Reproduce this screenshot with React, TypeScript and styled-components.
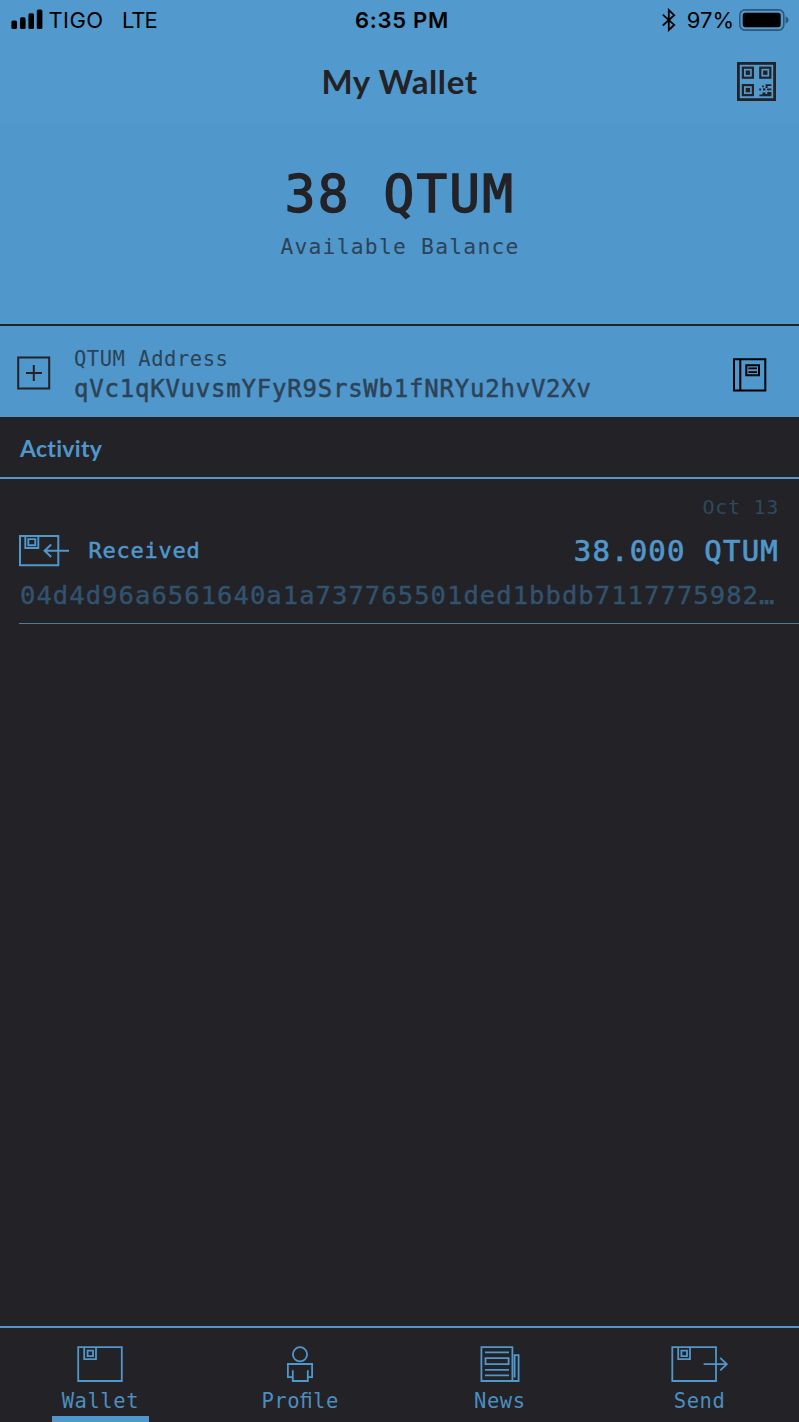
import React from "react";
import styled, { createGlobalStyle } from "styled-components";

const color = {
  blue: "#5097cb",
  header: "#5299cd",
  ink: "#232227",
  slate: "#2c4256",
  faded: "#32536d",
  faint: "#2e495e",
  tab: "#4b8ebf",
};

const GlobalStyle = createGlobalStyle`
  * { box-sizing: border-box; }
  html, body, #root { height: 100%; margin: 0; }
  body { background: ${color.ink}; overflow: hidden; }
  svg { display: block; flex: none; }
`;

const Screen = styled.div`
  display: flex;
  flex-direction: column;
  width: 799px;
  height: 1422px;
  background: ${color.ink};
`;

const StatusBar = styled.div`
  display: grid;
  grid-template-columns: 1fr auto 1fr;
  align-items: center;
  height: 40px;
  padding: 0 10px 0 11px;
  background: ${color.header};
  color: #000;
  font: 400 22px/40px Inter, sans-serif;
`;

const Carrier = styled.div`
  display: flex;
  align-items: center;
`;

const StatusText = styled.span<{ $gap?: number; $spacing?: number }>`
  margin-left: ${(p) => p.$gap ?? 0}px;
  letter-spacing: ${(p) => p.$spacing ?? 0}px;
  white-space: nowrap;
`;

const Clock = styled.div`
  padding-left: 4px;
  font-weight: 600;
  letter-spacing: 0.75px;
`;

const Indicators = styled.div`
  display: flex;
  align-items: center;
  justify-content: flex-end;
`;

const Header = styled.header`
  display: grid;
  grid-template-columns: 1fr auto 1fr;
  align-items: center;
  height: 84px;
  padding: 0 23px 2px;
  background: ${color.header};
`;

const Title = styled.h1`
  grid-column: 2;
  margin: 0;
  color: ${color.ink};
  font: 700 33px/40px Lato, sans-serif;
  letter-spacing: 0.6px;
`;

const HeaderAction = styled.div`
  justify-self: end;
`;

const Mono = styled.span<{
  $size: number;
  $line: number;
  $spacing: number;
  $color: string;
  $heft?: number;
}>`
  display: block;
  color: ${(p) => p.$color};
  font: 400 ${(p) => p.$size}px/${(p) => p.$line}px "DejaVu Sans Mono", monospace;
  letter-spacing: ${(p) => p.$spacing}px;
  -webkit-text-stroke: ${(p) => p.$heft ?? 0}px ${(p) => p.$color};
  white-space: pre;
`;

const Balance = styled.section`
  display: flex;
  flex-direction: column;
  align-items: center;
  height: 200px;
  padding: 40px 0 0 1px;
  background: ${color.blue};
`;

const AddressBar = styled.section`
  display: flex;
  align-items: flex-start;
  height: 92.5px;
  padding: 0 32px 0 17px;
  border-top: 2px solid ${color.ink};
  background: ${color.blue};
`;

const AddressText = styled.div`
  flex: 1;
  padding: 18px 0 0 23px;
`;

const IconTop = styled.div<{ $top: number }>`
  padding-top: ${(p) => p.$top}px;
`;

const SectionTitle = styled.h2`
  height: 62.5px;
  margin: 0;
  padding-left: 20px;
  border-bottom: 2px solid ${color.blue};
  color: ${color.blue};
  font: 700 23px/62px Lato, sans-serif;
  letter-spacing: 0.3px;
`;

const Transaction = styled.article`
  height: 145px;
  margin-left: 19px;
  padding: 13px 20px 0 0;
  border-bottom: 1px solid #4a7c9f;
`;

const DateLine = styled.div`
  display: flex;
  justify-content: flex-end;
`;

const TransactionMain = styled.div`
  display: flex;
  align-items: center;
  height: 58px;
`;

const TransactionKind = styled.div`
  flex: 1;
  padding-left: 19.5px;
`;

const TransactionHash = styled.div`
  margin-top: -1px;
  padding-left: 1px;
`;

const Spacer = styled.main`
  flex: 1;
`;

const TabBar = styled.nav`
  display: grid;
  grid-template-columns: repeat(4, 1fr);
  height: 96.5px;
  border-top: 2px solid ${color.blue};
`;

const Tab = styled.div`
  display: flex;
  flex-direction: column;
  align-items: center;
  padding: 18.5px 0 0 1px;
`;

const TabLabel = styled.div`
  height: 33px;
  padding-top: 3px;
`;

const ActiveMark = styled.div`
  width: 97px;
  height: 7px;
  background: ${color.blue};
`;

const SignalIcon = () => (
  <svg width="32" height="40" viewBox="11 0 32 40">
    <rect x="11.4" y="20.4" width="5.6" height="8.6" rx="1.6" />
    <rect x="20" y="17.3" width="5.6" height="11.7" rx="1.6" />
    <rect x="28.4" y="13.3" width="5.6" height="15.7" rx="1.6" />
    <rect x="36.8" y="9.6" width="5.6" height="19.4" rx="1.6" />
  </svg>
);

const BluetoothIcon = () => (
  <svg width="14" height="24" viewBox="0 0 14 24" fill="none" stroke="#000" strokeWidth="1.8">
    <path d="M0.8 6.6 L12.2 16.9 L6.8 22 V2 L12.2 7.2 L0.8 17.5" />
  </svg>
);

const BatteryIcon = () => (
  <svg width="50" height="22" viewBox="0 0 50 22">
    <rect x="0.8" y="0.9" width="44" height="20.2" rx="5" fill="none" stroke="#2e5878" strokeWidth="1.6" />
    <rect x="3.7" y="3.8" width="38" height="14.4" rx="2.6" />
    <path d="M46.6 7.2 Q49.6 8.4 49.6 11 Q49.6 13.6 46.6 14.8 Z" fill="#2e5878" />
  </svg>
);

const Finder = ({ x, y }: { x: number; y: number }) => (
  <>
    <rect x={x + 1.1} y={y + 1.1} width="10" height="10" fill="none" stroke={color.ink} strokeWidth="2.2" />
    <rect x={x + 3.9} y={y + 3.9} width="4.4" height="4.4" fill={color.ink} />
  </>
);

const QrIcon = () => (
  <svg width="39" height="39" viewBox="0 0 39 39">
    <rect x="1.4" y="1.4" width="36.2" height="36.2" fill="none" stroke={color.ink} strokeWidth="2.8" />
    <Finder x={4.8} y={4.6} />
    <Finder x={22.2} y={4.6} />
    <Finder x={4.8} y={22} />
    <path
      fill={color.ink}
      d="M22.2 26.4h2v2h-2zM25 23.4h1.8v1.8H25zM28.6 22.2H34.4v1.9H30.6v1.8h-2zM26 26.2h2.4v2.2H26zM30 26.4h4.4v1.8H32v1.9h2.4V34.2H22.4v-1.8h3v-1.8h3.2v1.5h1.6v-2h1.6v-1.9H30z"
    />
  </svg>
);

const PlusIcon = () => (
  <svg width="34" height="34" viewBox="0 0 34 34" fill="none" stroke={color.ink} strokeWidth="2">
    <path d="M1.2 1.4H32.2V32.6H1.2ZM9 17H25M16.8 9V25" />
  </svg>
);

const BookIcon = () => (
  <svg width="34" height="34" viewBox="0 0 34 34" fill="none" stroke="#000" strokeWidth="2">
    <path d="M1 1.2H32.3V32.6H1ZM7.3 1.2V32.6M13.3 7.3H26V17.3H13.3Z" />
    <path d="M15.4 10.4H24M15.4 14.2H24" strokeWidth="1.7" />
  </svg>
);

const ReceiveIcon = () => (
  <svg width="50" height="32" viewBox="0 0 50 32" fill="none" stroke={color.blue} strokeWidth="2">
    <path d="M1 1H39.3V30.2H1Z" />
    <path d="M6.3 1V13H19.3V1M9.3 4.1H16.3V10.3H9.3Z" strokeWidth="1.9" />
    <path d="M50 15.7H25.6M32.2 9.5L25.6 15.7L32.2 22" />
  </svg>
);

const tabIconProps = {
  height: 37,
  fill: "none",
  stroke: color.blue,
  strokeWidth: 1.8,
};

const WalletIcon = () => (
  <svg width="46" viewBox="0 0 46 37" {...tabIconProps}>
    <path d="M1.2 1.1H44.8V35H1.2ZM7.2 1.1V13.2H19V1.1M10.6 4.7H16V10.1H10.6Z" />
  </svg>
);

const ProfileIcon = () => (
  <svg width="28" viewBox="0 0 28 37" {...tabIconProps}>
    <circle cx="14" cy="8.3" r="7.1" />
    <path d="M6.8 24.3V35H21.8V24.3M6.8 31.2H1.9V18H26.1V31.2H21.8" />
  </svg>
);

const NewsIcon = () => (
  <svg width="40" viewBox="0 0 40 37" {...tabIconProps}>
    <path d="M1.4 1.1H32.4V35H1.4ZM32.4 35H38.6V9.2H34.6V31.4" />
    <path d="M5 6.3H29M5.5 12.2H28.6V18.1H5.5ZM5 23.8H29M5 29.4H29" />
  </svg>
);

const SendIcon = () => (
  <svg width="57" viewBox="0 0 57 37" {...tabIconProps}>
    <path d="M1.3 1.1H45V35H1.3ZM7.2 1.1V13.2H19V1.1M10.4 4.7H16V10.1H10.4Z" />
    <path d="M32.6 18.1H56M49.2 11.8L55.8 18.1L49.2 24.4" />
  </svg>
);

const tabs = [
  { label: "Wallet", Icon: WalletIcon, active: true },
  { label: "Proﬁle", Icon: ProfileIcon },
  { label: "News", Icon: NewsIcon },
  { label: "Send", Icon: SendIcon },
];

export default function App() {
  return (
    <Screen>
      <GlobalStyle />
      <StatusBar>
        <Carrier>
          <SignalIcon />
          <StatusText $gap={5.5} $spacing={0.4}>TIGO</StatusText>
          <StatusText $gap={18.5} $spacing={-1}>LTE</StatusText>
        </Carrier>
        <Clock>6:35 PM</Clock>
        <Indicators>
          <BluetoothIcon />
          <StatusText $gap={11}>97%</StatusText>
          <StatusText $gap={5}>
            <BatteryIcon />
          </StatusText>
        </Indicators>
      </StatusBar>
      <Header>
        <Title>My Wallet</Title>
        <HeaderAction>
          <QrIcon />
        </HeaderAction>
      </Header>
      <Balance>
        <Mono $size={51} $line={62} $spacing={2.2} $color={color.ink} $heft={1.4}>38 QTUM</Mono>
        <Mono $size={21.3} $line={41} $spacing={1.25} $color={color.slate}>Available Balance</Mono>
      </Balance>
      <AddressBar>
        <IconTop $top={30}>
          <PlusIcon />
        </IconTop>
        <AddressText>
          <Mono $size={20.5} $line={30} $spacing={0.53} $color={color.slate}>QTUM Address</Mono>
          <Mono $size={24} $line={30} $spacing={0.78} $color={color.slate} $heft={0.5}>
            qVc1qKVuvsmYFyR9SrsWb1fNRYu2hvV2Xv
          </Mono>
        </AddressText>
        <IconTop $top={32}>
          <BookIcon />
        </IconTop>
      </AddressBar>
      <SectionTitle>Activity</SectionTitle>
      <Transaction>
        <DateLine>
          <Mono $size={20} $line={30} $spacing={0.7} $color={color.faint}>Oct 13</Mono>
        </DateLine>
        <TransactionMain>
          <ReceiveIcon />
          <TransactionKind>
            <Mono $size={22} $line={30} $spacing={0.76} $color={color.blue} $heft={0.5}>Received</Mono>
          </TransactionKind>
          <Mono $size={29} $line={30} $spacing={1.2} $color={color.blue} $heft={0.7}>38.000 QTUM</Mono>
        </TransactionMain>
        <TransactionHash>
          <Mono $size={25.5} $line={32} $spacing={1.07} $color={color.faded} $heft={0.4}>
            04d4d96a6561640a1a737765501ded1bbdb7117775982…
          </Mono>
        </TransactionHash>
      </Transaction>
      <Spacer />
      <TabBar>
        {tabs.map(({ label, Icon, active }) => (
          <Tab key={label}>
            <Icon />
            <TabLabel>
              <Mono $size={20.5} $line={30} $spacing={0.56} $color={color.tab}>{label}</Mono>
            </TabLabel>
            {active && <ActiveMark />}
          </Tab>
        ))}
      </TabBar>
    </Screen>
  );
}
